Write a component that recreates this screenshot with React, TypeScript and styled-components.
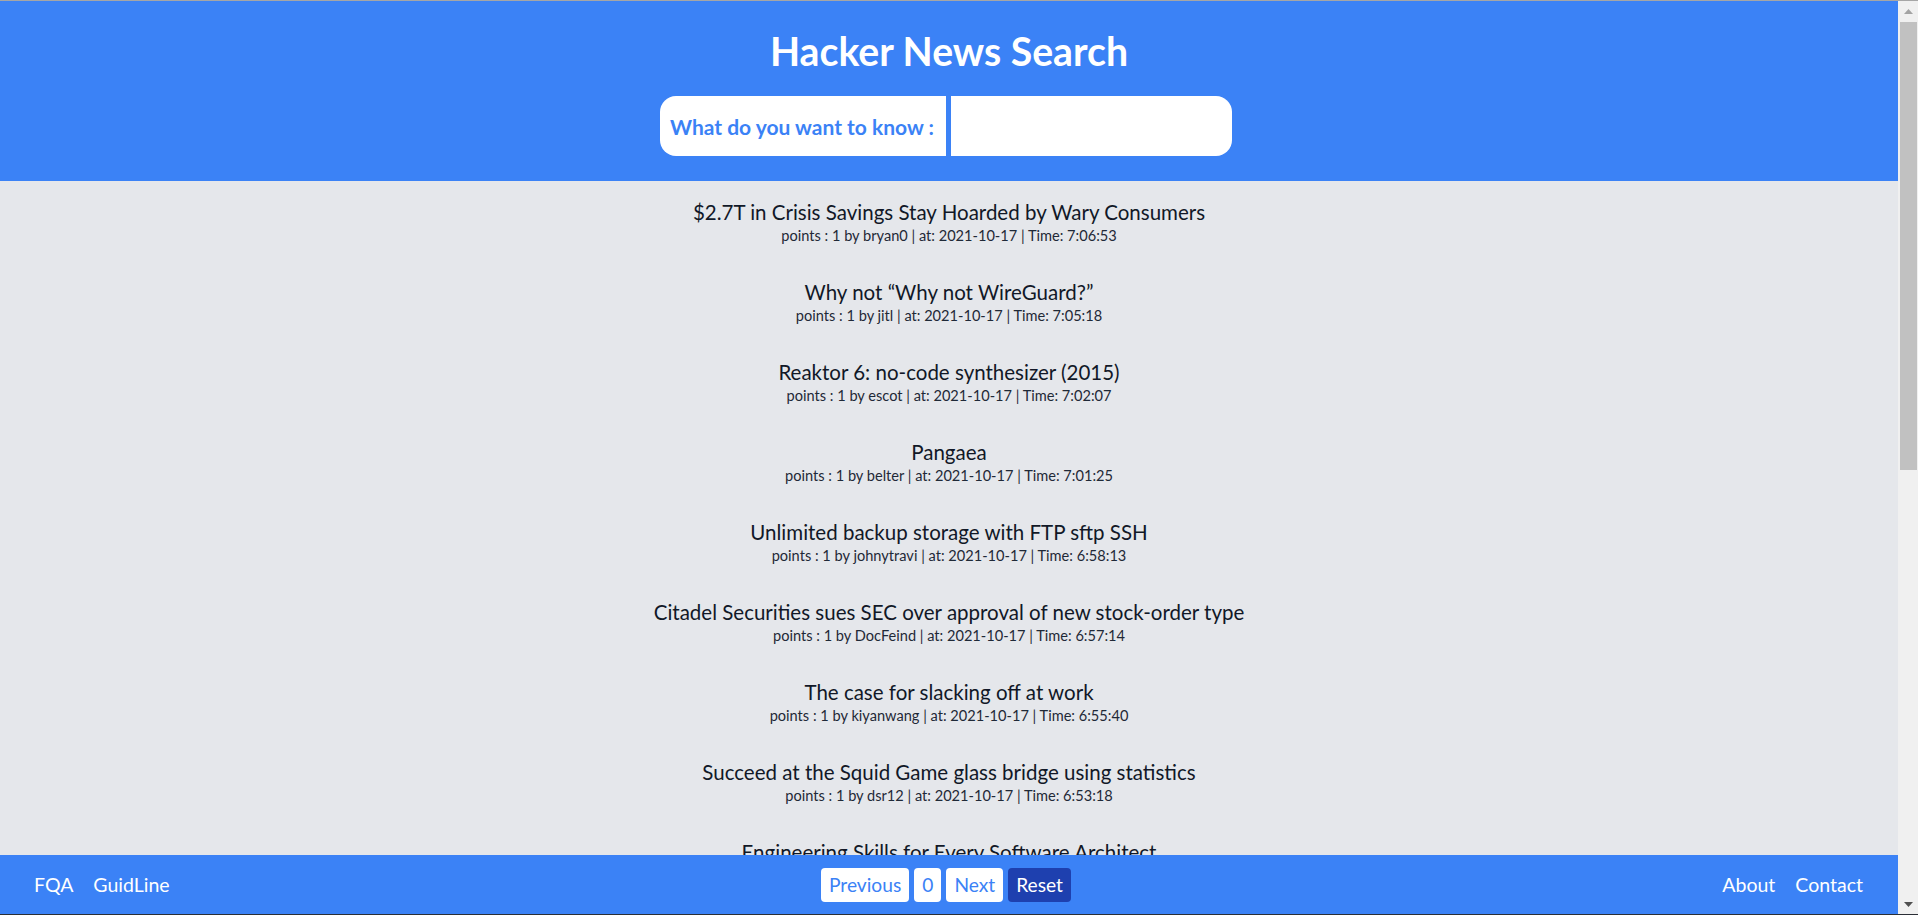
import React from "react";
import styled, { createGlobalStyle } from "styled-components";

const GlobalStyle = createGlobalStyle`
  *, *::before, *::after { box-sizing: border-box; }
  html, body { margin: 0; padding: 0; height: 100%; overflow: hidden; }
  body {
    font-family: Lato, "Open Sans", "Noto Sans", sans-serif;
    background: #e5e7eb;
    color: #1f2937;
  }
`;

const Screen = styled.div`
  height: 100vh;
  display: grid;
  grid-template-columns: 1fr 20px;
  border-top: 1px solid #a6a6a6;
  border-bottom: 1px solid #2b2f36;
  overflow: hidden;
`;

const Page = styled.div`
  display: flex;
  flex-direction: column;
  min-height: 0;
  overflow: hidden;
  background: #e5e7eb;
`;

const Header = styled.header`
  flex: none;
  height: 180px;
  background: #3b82f6;
  display: flex;
  flex-direction: column;
  align-items: center;
  padding-top: 26px;
`;

const Title = styled.h1`
  margin: 0;
  font-size: 39.2px;
  line-height: 48px;
  font-weight: 700;
  color: #ffffff;
`;

const SearchBar = styled.form`
  margin-top: 21px;
  display: flex;
  gap: 5px;
  height: 60px;
  transform: translateX(-3px);
`;

const SearchLabel = styled.label`
  width: 286px;
  display: flex;
  align-items: center;
  padding-left: 10px;
  background: #ffffff;
  border-radius: 16px 0 0 16px;
  font-size: 21px;
  font-weight: 700;
  color: #3b82f6;
  white-space: nowrap;
`;

const SearchInput = styled.input`
  width: 281px;
  border: none;
  outline: none;
  background: #ffffff;
  border-radius: 0 16px 16px 0;
  padding: 0 14px;
  font-family: inherit;
  font-size: 18px;
  color: #1f2937;
`;

const List = styled.main`
  flex: 1;
  min-height: 0;
  overflow: hidden;
  display: flex;
  flex-direction: column;
  gap: 32px;
  padding-top: 17px;
`;

const Story = styled.article`
  flex: none;
  text-align: center;
`;

const StoryTitle = styled.div`
  font-size: 20.5px;
  line-height: 28px;
  color: #111827;
`;

const StoryMeta = styled.div`
  font-size: 14.6px;
  line-height: 20px;
  color: #1f2937;
`;

const Footer = styled.footer`
  flex: none;
  height: 59px;
  background: #3b82f6;
  display: flex;
  align-items: center;
  justify-content: space-between;
  padding: 0 35px 0 34px;
`;

const LinkGroup = styled.nav`
  display: flex;
  gap: 20px;
`;

const FooterLink = styled.a`
  font-size: 19.5px;
  color: #ffffff;
  text-decoration: none;
  cursor: pointer;
`;

const Pager = styled.div`
  display: flex;
  gap: 5px;
`;

const PagerButton = styled.button<{ $primary?: boolean }>`
  height: 34px;
  padding: 0 8px;
  border: none;
  border-radius: 4px;
  font-family: inherit;
  font-size: 19.2px;
  background: ${(p) => (p.$primary ? "#1e40af" : "#ffffff")};
  color: ${(p) => (p.$primary ? "#ffffff" : "#3b82f6")};
  cursor: pointer;
`;

const ScrollBar = styled.div`
  background: #f0f0f0;
  display: flex;
  flex-direction: column;
`;

const ScrollArrow = styled.div<{ $dark?: boolean }>`
  flex: none;
  height: 20px;
  display: flex;
  align-items: center;
  justify-content: center;
  color: ${(p) => (p.$dark ? "#505050" : "#a3a3a3")};
`;

const ScrollTrack = styled.div`
  flex: 1;
  padding: 1px 1px 0 2px;
`;

const ScrollThumb = styled.div`
  height: 448px;
  background: #c1c1c1;
`;

const stories = [
  ["$2.7T in Crisis Savings Stay Hoarded by Wary Consumers", "bryan0", "7:06:53"],
  ["Why not \u201CWhy not WireGuard?\u201D", "jitl", "7:05:18"],
  ["Reaktor 6: no-code synthesizer (2015)", "escot", "7:02:07"],
  ["Pangaea", "belter", "7:01:25"],
  ["Unlimited backup storage with FTP sftp SSH", "johnytravi", "6:58:13"],
  ["Citadel Securities sues SEC over approval of new stock-order type", "DocFeind", "6:57:14"],
  ["The case for slacking off at work", "kiyanwang", "6:55:40"],
  ["Succeed at the Squid Game glass bridge using statistics", "dsr12", "6:53:18"],
  ["Engineering Skills for Every Software Architect", "rbanffy", "6:52:02"],
];

const Arrow = ({ down }: { down?: boolean }) => (
  <svg width="9" height="5" viewBox="0 0 9 5">
    <path d={down ? "M0 0H9L4.5 5Z" : "M0 5H9L4.5 0Z"} fill="currentColor" />
  </svg>
);

export default function App() {
  return (
    <>
      <GlobalStyle />
      <Screen>
        <Page>
          <Header>
            <Title>Hacker News Search</Title>
            <SearchBar onSubmit={(e) => e.preventDefault()}>
              <SearchLabel htmlFor="q">What do you want to know :</SearchLabel>
              <SearchInput id="q" type="text" />
            </SearchBar>
          </Header>
          <List>
            {stories.map(([title, author, time]) => (
              <Story key={title}>
                <StoryTitle>{title}</StoryTitle>
                <StoryMeta>
                  points : 1 by {author} | at: 2021-10-17 | Time: {time}
                </StoryMeta>
              </Story>
            ))}
          </List>
          <Footer>
            <LinkGroup>
              <FooterLink>FQA</FooterLink>
              <FooterLink>GuidLine</FooterLink>
            </LinkGroup>
            <Pager>
              <PagerButton>Previous</PagerButton>
              <PagerButton>0</PagerButton>
              <PagerButton>Next</PagerButton>
              <PagerButton $primary>Reset</PagerButton>
            </Pager>
            <LinkGroup>
              <FooterLink>About</FooterLink>
              <FooterLink>Contact</FooterLink>
            </LinkGroup>
          </Footer>
        </Page>
        <ScrollBar>
          <ScrollArrow>
            <Arrow />
          </ScrollArrow>
          <ScrollTrack>
            <ScrollThumb />
          </ScrollTrack>
          <ScrollArrow $dark>
            <Arrow down />
          </ScrollArrow>
        </ScrollBar>
      </Screen>
    </>
  );
}
